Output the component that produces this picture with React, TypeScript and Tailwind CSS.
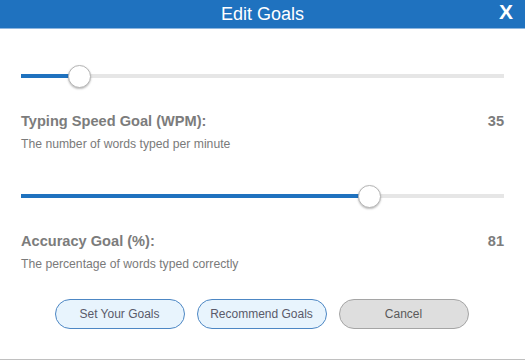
/* ─── Slider ─── */
function Slider({ percent }: { percent: number }) {
  return (
    <div className="relative h-[24px] mx-[21px] flex items-center">
      <div className="h-[4px] w-full bg-[#e6e6e6]">
        <div className="h-full bg-[#1f72bf]" style={{ width: `${percent}%` }} />
      </div>
      <div
        className="absolute top-[1px] h-[23px] w-[23px] -ml-[11px] rounded-full bg-white border border-[#b5b5b5] shadow-[0_1px_2px_rgba(0,0,0,0.25)]"
        style={{ left: `${percent}%` }}
      />
    </div>
  )
}

/* ─── Goal block ─── */
function Goal({ label, value, hint }: { label: string; value: number; hint: string }) {
  return (
    <div className="mx-[21px]">
      <div className="flex justify-between items-center h-[17px] text-[14.6px] font-bold text-[#7c7c7c]">
        <span>{label}</span>
        <span>{value}</span>
      </div>
      <p className="mt-[7px] h-[14px] leading-[14px] text-[12.2px] text-[#7a7a7a]">{hint}</p>
    </div>
  )
}

export default function App() {
  return (
    <div className="w-[525px] h-[360px] bg-white flex flex-col font-['Liberation_Sans',Arial,sans-serif]">
      <div className="relative h-[29px] bg-[#1f72bf] border-b border-[#8db6df] flex items-center justify-center">
        <span className="text-[18px] text-white">Edit Goals</span>
        <span className="absolute right-[12px] top-[-2px] text-[21px] leading-[28px] font-bold text-white">X</span>
      </div>

      <div className="mt-[35px]">
        <Slider percent={12} />
      </div>
      <div className="mt-[25px]">
        <Goal label="Typing Speed Goal (WPM):" value={35} hint="The number of words typed per minute" />
      </div>
      <div className="mt-[33px]">
        <Slider percent={72} />
      </div>
      <div className="mt-[25px]">
        <Goal label="Accuracy Goal (%):" value={81} hint="The percentage of words typed correctly" />
      </div>

      <div className="mt-[28px] flex justify-center gap-[12px] pr-[2px]">
        <button className="w-[130px] h-[30px] rounded-full bg-[#e8f4fd] border border-[#4d87c4] text-[12px] text-[#5a5a6a]">
          Set Your Goals
        </button>
        <button className="w-[130px] h-[30px] rounded-full bg-[#e8f4fd] border border-[#4d87c4] text-[12px] text-[#5a5a6a]">
          Recommend Goals
        </button>
        <button className="w-[130px] h-[30px] rounded-full bg-[#dedede] border border-[#a5a5a5] text-[12px] text-[#5a5a5a]">
          Cancel
        </button>
      </div>

      <div className="mt-auto h-[1px] bg-[#c0c0c0]" />
    </div>
  )
}
